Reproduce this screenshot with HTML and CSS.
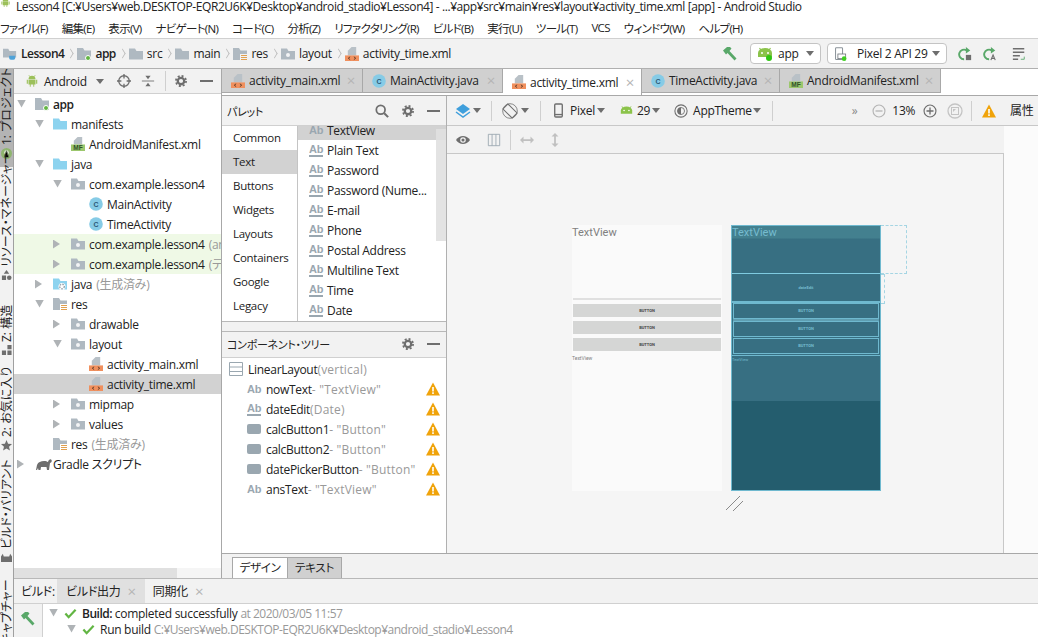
FILE: index.html
```html
<!DOCTYPE html>
<html lang="ja">
<head>
    <meta charset="UTF-8">
    <title>Lesson4 - Android Studio</title>
    <link rel="stylesheet" href="styles.css">
</head>
<body>
    <svg class="sprites" width="0" height="0">
        <symbol id="android" viewBox="0 0 16 16"><path fill="#9cc05a" d="M4 6a4 4 0 0 1 8 0zM4 6.700h8V12h-1.500v2.500h-1V12h-3v2.500h-1V12H4zM2 6.700h1.300V11H2zM12.700 6.700H14V11h-1.300z"/><path stroke="#9cc05a" d="M5.500 3 4.500 1.500M10.500 3l1-1.500"/></symbol>
        <symbol id="droid" viewBox="0 0 16 12"><path fill="#8bc34a" d="M1 10V6a7 5 0 0 1 14 0v4z"/><path stroke="#8bc34a" stroke-width="1.200" d="M4 3 2.500 1M12 3l1.500-2"/><circle cx="5" cy="6" r="1" fill="#fff"/><circle cx="11" cy="6" r="1" fill="#fff"/></symbol>
        <symbol id="droid-run" viewBox="0 0 16 14"><path fill="#8bc34a" d="M1 10V6a7 5 0 0 1 14 0v4z"/><path stroke="#8bc34a" stroke-width="1.200" d="M4 3 2.500 1M12 3l1.500-2"/><circle cx="5" cy="6" r="1" fill="#fff"/><circle cx="11" cy="6" r="1" fill="#fff"/><circle cx="12" cy="11" r="3" fill="#2fc612"/></symbol>
        <symbol id="folder" viewBox="0 0 14 14"><path fill="#afb9c1" d="M0 1.500h6L7.500 4H14v8.500H0z"/></symbol>
        <symbol id="folder-blue" viewBox="0 0 14 14"><path fill="#8dd3ef" d="M0 1.500h6L7.500 4H14v8.500H0z"/></symbol>
        <symbol id="package" viewBox="0 0 14 14"><path fill="#afb9c1" d="M0 1.500h6L7.500 4H14v8.500H0z"/><circle cx="7" cy="8" r="2" fill="#f2f4f5"/></symbol>
        <symbol id="module" viewBox="0 0 14 14"><path fill="#afb9c1" d="M0 1h6l1.500 2.500H14v9.500H0z"/><circle cx="11" cy="11" r="2.500" fill="#62b543" stroke="#fff"/></symbol>
        <symbol id="project" viewBox="0 0 16 14"><path fill="#afb9c1" d="M0 1h6l1.500 2.500H15V11H0z"/><path fill="#4fa3d9" d="M7 9h7v2.500a2 2 0 0 1-2 2H9a2 2 0 0 1-2-2z"/></symbol>
        <symbol id="res-folder" viewBox="0 0 14 14"><path fill="#afb9c1" d="M0 1h6l1.500 2.500H14V7H7v6H0z"/><path stroke="#e0a050" d="M8 8.500h6M8 10.500h6M8 12.500h6"/></symbol>
        <symbol id="gen-folder" viewBox="0 0 14 14"><path fill="#8dd3ef" d="M0 1.500h6L7.500 4H14v8.500H0z"/><circle cx="9" cy="9.500" r="3.500" fill="#fff"/><circle cx="9" cy="9.500" r="2.300" fill="none" stroke="#9aa7b0" stroke-width="1.500" stroke-dasharray="1.500 1"/></symbol>
        <symbol id="xml" viewBox="0 0 15 15"><path fill="#b9c1c7" d="M7 0h5v9H3V4z"/><path fill="#f0905e" d="M0 9h15v6H0z"/><path fill="none" stroke="#5a3a28" d="M5.500 10.500 3.500 12l2 1.500M9.500 10.500l2 1.500-2 1.500"/></symbol>
        <symbol id="manifest" viewBox="0 0 15 15"><path fill="#b9c1c7" d="M7 0h5v8H3V4z"/><path fill="#9cc76d" d="M0 8h15v7H0z"/><text x="7.500" y="14" text-anchor="middle" class="icon-text" fill="#30502a">MF</text></symbol>
        <symbol id="class" viewBox="0 0 14 14"><circle cx="7" cy="7" r="6.800" fill="#86cbe6"/><text x="7" y="10" text-anchor="middle" class="icon-text" fill="#2c5a78">C</text></symbol>
        <symbol id="gradle" viewBox="0 0 18 14"><path fill="#6e6e6e" d="M1 13l1-5c1-3 4-4 7-4 2 0 3 .500 4 1 .500-2 2-3 3-2.500s1 2 0 3l-1 .500-1 7h-2l-.500-3H6l-.500 3h-2l-.500-2-1 2z"/></symbol>
        <symbol id="gear" viewBox="0 0 16 16"><circle cx="8" cy="8" r="3.700" fill="none" stroke="#6e6e6e" stroke-width="2.600"/><circle cx="8" cy="8" r="5.800" fill="none" stroke="#6e6e6e" stroke-width="2" stroke-dasharray="2.300 2.250"/></symbol>
        <symbol id="hammer" viewBox="0 0 16 16"><path fill="#59a869" d="M1 4.500 5 1l3 0 1.500 1.500L7.500 5 14.500 12.500l-2 2L5.500 7 4 8.500z"/></symbol>
        <symbol id="warn" viewBox="0 0 14 14"><path fill="#f0a30a" d="M7 .500 14 13.500H0z"/><path fill="#fff" d="M6.200 5h1.600v4.500H6.200zM6.200 10.300h1.600v1.700H6.200z"/></symbol>
        <symbol id="search" viewBox="0 0 16 16"><circle cx="6.500" cy="6.500" r="5" fill="none" stroke="#6e6e6e" stroke-width="2"/><path stroke="#6e6e6e" stroke-width="2.400" d="m10.500 10.500 4.500 4.500"/></symbol>
        <symbol id="target" viewBox="0 0 16 16"><circle cx="8" cy="8" r="6" fill="none" stroke="#6e6e6e" stroke-width="1.500"/><path stroke="#6e6e6e" stroke-width="1.500" d="M8 0v5M8 11v5M0 8h5M11 8h5"/></symbol>
        <symbol id="collapse" viewBox="0 0 16 16"><path stroke="#6e6e6e" d="M1 8h14"/><path fill="#6e6e6e" d="M5 2h6L8 6zM5 14h6l-3-4z"/></symbol>
        <symbol id="layers" viewBox="0 0 16 16"><path fill="none" stroke="#3f9fdc" stroke-width="1.500" d="m1 9 7 5 7-5"/><path fill="#3f9fdc" d="m8 1 7 5-7 5-7-5z"/></symbol>
        <symbol id="rotate" viewBox="0 0 16 16"><circle cx="8" cy="8" r="7.300" fill="none" stroke="#6e6e6e" stroke-width=".800"/><rect x="4.500" y="1.500" width="7" height="13" fill="#f2f2f2" stroke="#6e6e6e" transform="rotate(-45 8 8)"/></symbol>
        <symbol id="phone" viewBox="0 0 10 16"><rect x=".800" y=".800" width="8.400" height="14.400" rx="1.200" fill="none" stroke="#6e6e6e" stroke-width="1.500"/><path stroke="#6e6e6e" stroke-width="1.500" d="M1 12.500h8"/></symbol>
        <symbol id="device" viewBox="0 0 16 18"><rect x="1" y="1" width="9" height="15" rx="1" fill="none" stroke="#8a9299" stroke-width="1.300"/><rect x="4" y="9" width="10" height="6" fill="#fff" stroke="#6a7076"/><circle cx="12" cy="15" r="3" fill="#3fcf20"/></symbol>
        <symbol id="theme" viewBox="0 0 16 16"><circle cx="8" cy="8" r="7" fill="none" stroke="#6e6e6e" stroke-width="1.200"/><circle cx="8" cy="8" r="4" fill="none" stroke="#6e6e6e"/><path fill="#6e6e6e" d="M8 4a4 4 0 0 0 0 8z"/></symbol>
        <symbol id="zoom-out" viewBox="0 0 16 16"><circle cx="8" cy="8" r="6.800" fill="none" stroke="#b5b5b5" stroke-width="1.300"/><path stroke="#b5b5b5" stroke-width="1.500" d="M4 8h8"/></symbol>
        <symbol id="zoom-in" viewBox="0 0 16 16"><circle cx="8" cy="8" r="6.800" fill="none" stroke="#6e6e6e" stroke-width="1.300"/><path stroke="#6e6e6e" stroke-width="1.500" d="M4 8h8M8 4v8"/></symbol>
        <symbol id="zoom-fit" viewBox="0 0 16 16"><circle cx="8" cy="8" r="7" fill="none" stroke="#c4c4c4" stroke-width="1.300"/><rect x="4.500" y="4.500" width="7" height="7" fill="none" stroke="#c4c4c4"/><path fill="#c4c4c4" d="M6 6h3l-3 3z"/></symbol>
        <symbol id="eye" viewBox="0 0 16 16"><path fill="#6e6e6e" d="M0 8c2-3 5-4.500 8-4.500S14 5 16 8c-2 3-5 4.500-8 4.500S2 11 0 8z"/><circle cx="8" cy="8" r="3.200" fill="#f2f2f2"/><circle cx="8" cy="8" r="1.800" fill="#6e6e6e"/></symbol>
        <symbol id="columns" viewBox="0 0 16 16"><path fill="none" stroke="#9aa7b0" d="M1.500 1.500h13v13h-13zM5.800 1.500v13M10.200 1.500v13"/></symbol>
        <symbol id="arrows-h" viewBox="0 0 16 16"><path fill="#c0c0c0" d="M0 8l4-4v3h8V4l4 4-4 4V9H4v3z"/></symbol>
        <symbol id="arrows-v" viewBox="0 0 16 16"><path fill="#c0c0c0" d="M8 0l4 4H9v8h3l-4 4-4-4h3V4H4z"/></symbol>
        <symbol id="linear" viewBox="0 0 14 14"><path fill="none" stroke="#9aa7b0" d="M.500.500h13v13H.500zM.500 5h13M.500 9.500h13"/></symbol>
        <symbol id="button" viewBox="0 0 14 14"><rect y="2" width="14" height="10" rx="2" fill="#9aa7b0"/></symbol>
        <symbol id="rerun" viewBox="0 0 16 16"><path fill="none" stroke="#59a869" stroke-width="2.200" d="M7 14a5.500 5.500 0 1 1 3-10"/><path fill="#59a869" d="M9 0l5 4-5 3.500z"/><rect x="9" y="9" width="6" height="6" fill="#6e6e6e"/></symbol>
        <symbol id="apply" viewBox="0 0 16 16"><path fill="none" stroke="#59a869" stroke-width="2.200" d="M7 14a5.500 5.500 0 1 1 3-10"/><path fill="#59a869" d="M9 0l5 4-5 3.500z"/><path fill="none" stroke="#6e6e6e" stroke-width="1.300" d="m9 15 2.500-6 2.500 6M10 13h3"/></symbol>
        <symbol id="lines" viewBox="0 0 16 16"><path stroke="#6e6e6e" stroke-width="1.500" d="M1 2h13M1 6h13M1 10h8M1 14h6"/><path fill="none" stroke="#59a869" d="M10 14h4v-3"/></symbol>
        <symbol id="check" viewBox="0 0 14 14"><path fill="none" stroke="#62b543" stroke-width="2.400" d="m1.500 7 3.500 4 7.500-8"/></symbol>
        <symbol id="studio" viewBox="0 0 12 12"><circle cx="6" cy="6" r="6" fill="#8fb56f"/><circle cx="6" cy="5" r="2.500" fill="#e8efe0"/><path stroke="#5b6b50" d="M3.500 10 6 3l2.500 7"/></symbol>
        <symbol id="grid-icon" viewBox="0 0 12 12"><path fill="#6e6e6e" d="M1 6h4.500v5H1zM7 6h4.500v5H7zM7 0h4.500v4.500H7z"/></symbol>
        <symbol id="struct-icon" viewBox="0 0 12 12"><path fill="#6e6e6e" d="M6 0l3 4H3zM1 6h4.500v5H1z"/><circle cx="9" cy="8.500" r="2.500" fill="#6e6e6e"/></symbol>
        <symbol id="star" viewBox="0 0 14 14"><path fill="#6e6e6e" d="m7 0 2 4.800 5 .4-3.800 3.300 1.200 5L7 10.800 2.600 13.500l1.200-5L0 5.200l5-.4z"/></symbol>
        <symbol id="variant" viewBox="0 0 12 12"><path fill="#6e6e6e" d="M0 11V5l2-3 1 3h6l1-3 2 3v6z"/></symbol>
    </svg>

    <div class="titlebar">
        <svg class="title-icon"><use href="#android"/></svg>
        <span>Lesson4 [C:¥Users¥web.DESKTOP-EQR2U6K¥Desktop¥android_stadio¥Lesson4] - ...¥app¥src¥main¥res¥layout¥activity_time.xml [app] - Android Studio</span>
    </div>

    <div class="menubar">
        <span>ファイル(F)</span><span>編集(E)</span><span>表示(V)</span><span>ナビゲート(N)</span><span>コード(C)</span><span>分析(Z)</span><span>リファクタリング(R)</span><span>ビルド(B)</span><span>実行(U)</span><span>ツール(T)</span><span>VCS</span><span>ウィンドウ(W)</span><span>ヘルプ(H)</span>
    </div>

    <div class="navbar">
        <svg class="ico nav-first"><use href="#project"/></svg><b>Lesson4</b><i class="chev"></i>
        <svg class="ico"><use href="#module"/></svg><b>app</b><i class="chev"></i>
        <svg class="ico"><use href="#folder"/></svg><span>src</span><i class="chev"></i>
        <svg class="ico"><use href="#folder"/></svg><span>main</span><i class="chev"></i>
        <svg class="ico"><use href="#res-folder"/></svg><span>res</span><i class="chev"></i>
        <svg class="ico"><use href="#package"/></svg><span>layout</span><i class="chev"></i>
        <svg class="ico"><use href="#xml"/></svg><span>activity_time.xml</span>
        <div class="nav-right">
            <svg class="ico hammer-top"><use href="#hammer"/></svg>
            <div class="combo combo-app"><svg class="ico-droid"><use href="#droid-run"/></svg><span>app</span><i class="caret"></i></div>
            <div class="combo combo-device"><svg class="ico"><use href="#device"/></svg><span>Pixel 2 API 29</span><i class="caret"></i></div>
            <svg class="ico run-first"><use href="#rerun"/></svg>
            <svg class="ico"><use href="#apply"/></svg>
            <svg class="ico"><use href="#lines"/></svg>
        </div>
    </div>

    <div class="workspace">
        <div class="stripe">
            <div class="stripe-item active"><svg class="stripe-icon"><use href="#studio"/></svg><span>1: プロジェクト</span></div>
            <div class="stripe-item res"><svg class="stripe-icon"><use href="#struct-icon"/></svg><span>リソース・マネージャー</span></div>
            <div class="stripe-item struct"><svg class="stripe-icon"><use href="#grid-icon"/></svg><span>Z: 構造</span></div>
            <div class="stripe-item fav"><svg class="stripe-icon"><use href="#star"/></svg><span>2: お気に入り</span></div>
            <div class="stripe-item variants"><svg class="stripe-icon"><use href="#variant"/></svg><span>ビルド・バリアント</span></div>
            <div class="stripe-item capture"><span>キャプチャー</span></div>
        </div>

        <div class="center">
            <div class="upper">
                <div class="project">
                    <div class="panel-head project-head">
                        <svg class="ico"><use href="#android"/></svg>
                        <span>Android</span><i class="caret"></i>
                        <svg class="ico head-tool"><use href="#target"/></svg>
                        <svg class="ico head-tool"><use href="#collapse"/></svg>
                        <i class="sep"></i>
                        <svg class="ico"><use href="#gear"/></svg>
                        <i class="minus"></i>
                    </div>
                    <div class="tree">
                        <div class="row d0"><i class="arrow open"></i><svg class="ico"><use href="#module"/></svg><b>app</b></div>
                        <div class="row d1"><i class="arrow open"></i><svg class="ico"><use href="#folder-blue"/></svg><span>manifests</span></div>
                        <div class="row d2"><i class="arrow none"></i><svg class="ico"><use href="#manifest"/></svg><span>AndroidManifest.xml</span></div>
                        <div class="row d1"><i class="arrow open"></i><svg class="ico"><use href="#folder-blue"/></svg><span>java</span></div>
                        <div class="row d2"><i class="arrow open"></i><svg class="ico"><use href="#package"/></svg><span>com.example.lesson4</span></div>
                        <div class="row d3"><i class="arrow none"></i><svg class="ico"><use href="#class"/></svg><span>MainActivity</span></div>
                        <div class="row d3"><i class="arrow none"></i><svg class="ico"><use href="#class"/></svg><span>TimeActivity</span></div>
                        <div class="row d2 test"><i class="arrow"></i><svg class="ico"><use href="#package"/></svg><span>com.example.lesson4</span><em>(androidTest)</em></div>
                        <div class="row d2 test"><i class="arrow"></i><svg class="ico"><use href="#package"/></svg><span>com.example.lesson4</span><em>(テスト)</em></div>
                        <div class="row d1"><i class="arrow"></i><svg class="ico"><use href="#gen-folder"/></svg><span>java</span><em>(生成済み)</em></div>
                        <div class="row d1"><i class="arrow open"></i><svg class="ico"><use href="#res-folder"/></svg><span>res</span></div>
                        <div class="row d2"><i class="arrow"></i><svg class="ico"><use href="#package"/></svg><span>drawable</span></div>
                        <div class="row d2"><i class="arrow open"></i><svg class="ico"><use href="#package"/></svg><span>layout</span></div>
                        <div class="row d3"><i class="arrow none"></i><svg class="ico"><use href="#xml"/></svg><span>activity_main.xml</span></div>
                        <div class="row d3 selected"><i class="arrow none"></i><svg class="ico"><use href="#xml"/></svg><span>activity_time.xml</span></div>
                        <div class="row d2"><i class="arrow"></i><svg class="ico"><use href="#package"/></svg><span>mipmap</span></div>
                        <div class="row d2"><i class="arrow"></i><svg class="ico"><use href="#package"/></svg><span>values</span></div>
                        <div class="row d1"><i class="arrow none"></i><svg class="ico"><use href="#res-folder"/></svg><span>res</span><em>(生成済み)</em></div>
                        <div class="row d0"><i class="arrow"></i><svg class="ico gradle"><use href="#gradle"/></svg><span>Gradle スクリプト</span></div>
                    </div>
                    <div class="hscroll"><div class="hthumb"></div></div>
                </div>

                <div class="editor">
                    <div class="tabbar">
                        <div class="tab t-main"><svg class="ico"><use href="#xml"/></svg><span>activity_main.xml</span><i class="close">×</i></div>
                        <div class="tab t-mainact"><svg class="ico"><use href="#class"/></svg><span>MainActivity.java</span><i class="close">×</i></div>
                        <div class="tab t-time on"><svg class="ico"><use href="#xml"/></svg><span>activity_time.xml</span><i class="close">×</i></div>
                        <div class="tab t-timeact"><svg class="ico"><use href="#class"/></svg><span>TimeActivity.java</span><i class="close">×</i></div>
                        <div class="tab t-manifest"><svg class="ico"><use href="#manifest"/></svg><span>AndroidManifest.xml</span><i class="close">×</i></div>
                    </div>
                    <div class="editor-body">
                        <div class="editor-main">
                            <div class="left-col">
                                <div class="panel-head palette-head">
                                    <span class="panel-title">パレット</span>
                                    <svg class="ico"><use href="#search"/></svg>
                                    <svg class="ico"><use href="#gear"/></svg>
                                    <i class="minus"></i>
                                </div>
                                <div class="palette">
                                    <div class="cats">
                                        <div class="cat">Common</div>
                                        <div class="cat on">Text</div>
                                        <div class="cat">Buttons</div>
                                        <div class="cat">Widgets</div>
                                        <div class="cat">Layouts</div>
                                        <div class="cat">Containers</div>
                                        <div class="cat">Google</div>
                                        <div class="cat">Legacy</div>
                                    </div>
                                    <div class="widgets">
                                        <div class="widget on"><span class="ab">Ab</span>TextView</div>
                                        <div class="widget"><span class="ab line">Ab</span>Plain Text</div>
                                        <div class="widget"><span class="ab line">Ab</span>Password</div>
                                        <div class="widget"><span class="ab line">Ab</span>Password (Nume...</div>
                                        <div class="widget"><span class="ab line">Ab</span>E-mail</div>
                                        <div class="widget"><span class="ab line">Ab</span>Phone</div>
                                        <div class="widget"><span class="ab line">Ab</span>Postal Address</div>
                                        <div class="widget"><span class="ab line">Ab</span>Multiline Text</div>
                                        <div class="widget"><span class="ab line">Ab</span>Time</div>
                                        <div class="widget"><span class="ab line">Ab</span>Date</div>
                                        <div class="vscroll"></div>
                                    </div>
                                </div>
                                <div class="panel-head comp-head">
                                    <span class="panel-title">コンポーネント・ツリー</span>
                                    <svg class="ico"><use href="#gear"/></svg>
                                    <i class="minus"></i>
                                </div>
                                <div class="comp-tree">
                                    <div class="comp root"><svg class="ico"><use href="#linear"/></svg><span>LinearLayout<em>(vertical)</em></span></div>
                                    <div class="comp"><span class="ab">Ab</span><span>nowText<em>- "TextView"</em></span><svg class="ico warn"><use href="#warn"/></svg></div>
                                    <div class="comp"><span class="ab line">Ab</span><span>dateEdit<em>(Date)</em></span><svg class="ico warn"><use href="#warn"/></svg></div>
                                    <div class="comp"><svg class="ico btn-ico"><use href="#button"/></svg><span>calcButton1<em>- "Button"</em></span><svg class="ico warn"><use href="#warn"/></svg></div>
                                    <div class="comp"><svg class="ico btn-ico"><use href="#button"/></svg><span>calcButton2<em>- "Button"</em></span><svg class="ico warn"><use href="#warn"/></svg></div>
                                    <div class="comp"><svg class="ico btn-ico"><use href="#button"/></svg><span>datePickerButton<em>- "Button"</em></span><svg class="ico warn"><use href="#warn"/></svg></div>
                                    <div class="comp"><span class="ab">Ab</span><span>ansText<em>- "TextView"</em></span><svg class="ico warn"><use href="#warn"/></svg></div>
                                </div>
                            </div>

                            <div class="design">
                                <div class="toolbar tb-one">
                                    <svg class="ico tb-layers"><use href="#layers"/></svg><i class="caret"></i>
                                    <i class="sep tb-sep1"></i>
                                    <svg class="ico tb-rotate"><use href="#rotate"/></svg><i class="caret"></i>
                                    <i class="sep tb-sep2"></i>
                                    <svg class="ico-phone"><use href="#phone"/></svg>
                                    <span class="tb-pixel">Pixel</span><i class="caret"></i>
                                    <svg class="ico-droid tb-droid"><use href="#droid"/></svg>
                                    <span class="tb-api">29</span><i class="caret"></i>
                                    <svg class="ico tb-theme"><use href="#theme"/></svg>
                                    <span class="tb-app">AppTheme</span><i class="caret"></i>
                                    <i class="sep tb-sep3"></i>
                                    <span class="tb-more">»</span>
                                    <svg class="ico"><use href="#zoom-out"/></svg>
                                    <span class="tb-zoom">13%</span>
                                    <svg class="ico"><use href="#zoom-in"/></svg>
                                    <svg class="ico tb-fit"><use href="#zoom-fit"/></svg>
                                    <i class="sep tb-sep4"></i>
                                    <svg class="ico tb-warn"><use href="#warn"/></svg>
                                </div>
                                <div class="toolbar tb-two">
                                    <svg class="ico"><use href="#eye"/></svg>
                                    <svg class="ico tb-cols"><use href="#columns"/></svg>
                                    <i class="sep"></i>
                                    <svg class="ico"><use href="#arrows-h"/></svg>
                                    <svg class="ico tb-vert"><use href="#arrows-v"/></svg>
                                </div>
                                <div class="surface">
                                    <div class="screens">
                                        <div class="screen light">
                                            <div class="s-title">TextView</div>
                                            <div class="s-edit"></div>
                                            <div class="s-btn">BUTTON</div>
                                            <div class="s-btn">BUTTON</div>
                                            <div class="s-btn">BUTTON</div>
                                            <div class="s-small">TextView</div>
                                        </div>
                                        <div class="screen blue">
                                            <div class="b-title">TextView</div>
                                            <div class="b-edit">dateEdit</div>
                                            <div class="b-btn">BUTTON</div>
                                            <div class="b-btn hatch">BUTTON</div>
                                            <div class="b-btn">BUTTON</div>
                                            <div class="b-small">TextView</div>
                                            <div class="b-empty"></div>
                                            <div class="dash dash-one"></div>
                                            <div class="dash dash-two"></div>
                                        </div>
                                    </div>
                                    <svg class="resize" width="20" height="18"><path stroke="#8a8a8a" d="M1 15 15 1M8 16 18 6"/></svg>
                                </div>
                            </div>

                            <div class="attrs">
                                <div class="attrs-head">属性</div>
                            </div>
                        </div>
                        <div class="mode-tabs">
                            <div class="mode on">デザイン</div>
                            <div class="mode">テキスト</div>
                        </div>
                    </div>
                </div>
            </div>

            <div class="build">
                <div class="build-tabs">
                    <span class="build-label">ビルド:</span>
                    <div class="build-tab on">ビルド出力<i class="close">×</i></div>
                    <div class="build-tab">同期化<i class="close">×</i></div>
                </div>
                <div class="build-body">
                    <div class="build-tools"><svg class="ico"><use href="#hammer"/></svg></div>
                    <div class="build-log">
                        <div class="log l0"><i class="arrow open"></i><svg class="ico-check"><use href="#check"/></svg><span><b>Build:</b> completed successfully <em>at 2020/03/05 11:57</em></span></div>
                        <div class="log l1"><i class="arrow open"></i><svg class="ico-check"><use href="#check"/></svg><span>Run build <em>C:¥Users¥web.DESKTOP-EQR2U6K¥Desktop¥android_stadio¥Lesson4</em></span></div>
                    </div>
                </div>
            </div>
        </div>
    </div>
</body>
</html>
```

FILE: styles.css
```css
* {
    box-sizing: border-box;
}
html, body {
    margin: 0;
    height: 100%;
}
body {
    width: 1038px;
    height: 637px;
    overflow: hidden;
    display: flex;
    flex-direction: column;
    background: #f2f2f2;
    color: #222;
    font-family: "Open Sans", "Noto Sans CJK JP", sans-serif;
    font-size: 12px;
    letter-spacing: -.28px;
    font-feature-settings: "palt";
}
i, em {
    font-style: normal;
}
em {
    color: #999;
}
b {
    font-weight: 600;
    letter-spacing: -.5px;
}
.sprites {
    position: absolute;
}
.icon-text {
    font-family: "Liberation Sans", sans-serif;
    font-size: 7px;
    font-weight: bold;
    letter-spacing: 0;
}
.ico {
    width: 14px;
    height: 14px;
    flex: none;
}
.ico-droid {
    width: 16px;
    height: 14px;
    flex: none;
}
.ico-phone {
    width: 9px;
    height: 15px;
    flex: none;
}
.ico-check {
    width: 13px;
    height: 13px;
    flex: none;
}
.caret {
    flex: none;
    width: 0;
    height: 0;
    border-left: 4px solid transparent;
    border-right: 4px solid transparent;
    border-top: 5px solid #6e6e6e;
}
.sep {
    flex: none;
    width: 1px;
    height: 20px;
    background: #cfcfcf;
}
.minus {
    flex: none;
    width: 13px;
    height: 2px;
    background: #6e6e6e;
}
.close {
    color: #b5b5b5;
    font-size: 15px;
    line-height: 1;
}

/* top bars */
.titlebar {
    height: 17px;
    background: #fff;
    display: flex;
    align-items: center;
    padding-bottom: 4px;
    white-space: nowrap;
    letter-spacing: -.41px;
}
.title-icon {
    width: 11px;
    height: 11px;
    margin: -9px 5px 0 0;
}
.menubar {
    height: 22px;
    background: #fff;
    display: flex;
    align-items: center;
    gap: 14px;
    white-space: nowrap;
    border-bottom: 1px solid #d0d0d0;
    font-size: 11.500px;
    letter-spacing: -.7px;
}
.navbar {
    height: 30px;
    display: flex;
    align-items: center;
    border-bottom: 1px solid #b0b0b0;
    white-space: nowrap;
}
.navbar .ico {
    margin-right: 4px;
}
.nav-first {
    margin-left: 3px;
}
.chev {
    flex: none;
    width: 7px;
    height: 7px;
    margin: 0 3px;
    border-top: 1px solid #b8b8b8;
    border-right: 1px solid #b8b8b8;
    transform: scaleX(.6) rotate(45deg);
}
.nav-right {
    margin-left: auto;
    display: flex;
    align-items: center;
}
.hammer-top {
    width: 16px;
    height: 16px;
}
.combo {
    height: 21px;
    display: flex;
    align-items: center;
    gap: 5px;
    background: #fff;
    border: 1px solid #c4c4c4;
    border-radius: 4px;
    padding: 0 6px;
}
.combo-app {
    width: 71px;
    margin-left: 8px;
}
.combo-app .caret, .combo-device .caret {
    margin-left: auto;
}
.combo-device {
    width: 120px;
    margin-left: 6px;
}
.navbar .run-first {
    margin-left: 11px;
    margin-right: 11px;
}
.nav-right .ico:nth-last-child(2) {
    margin-right: 15px;
}
.nav-right .ico:last-child {
    margin-right: 12px;
}

.workspace {
    flex: 1;
    display: flex;
    min-height: 0;
}

/* side stripe */
.stripe {
    width: 14px;
    flex: none;
    border-right: 1px solid #a0a0a0;
    overflow: hidden;
    font-size: 12px;
    line-height: 13px;
    letter-spacing: 0;
    display: flex;
    flex-direction: column;
}
.stripe-item {
    flex: none;
    display: flex;
    align-items: center;
    gap: 3px;
    writing-mode: vertical-rl;
    text-orientation: sideways;
    transform: rotate(180deg);
    white-space: nowrap;
}
.stripe-icon {
    width: 11px;
    height: 11px;
    flex: none;
    transform: rotate(180deg);
}
.stripe-item.active {
    height: 98px;
    background: #b4b4b4;
    padding-top: 8px;
}
.stripe-item.res {
    margin-top: 4px;
    height: 110px;
}
.stripe-item.struct {
    margin-top: 25px;
    height: 50px;
}
.stripe-item.fav {
    margin-top: 20px;
    height: 75px;
}
.stripe-item.variants {
    margin-top: 22px;
    height: 90px;
}
.stripe-item.capture {
    margin-top: 23px;
    height: 58px;
}

.center {
    flex: 1;
    min-width: 0;
    display: flex;
    flex-direction: column;
}
.upper {
    height: 509px;
    display: flex;
}

/* project panel */
.project {
    width: 208px;
    flex: none;
    display: flex;
    flex-direction: column;
    background: #fff;
    border-right: 1px solid #a8a8a8;
    overflow: hidden;
}
.panel-head {
    flex: none;
    display: flex;
    align-items: center;
    background: #f2f2f2;
    white-space: nowrap;
}
.project-head {
    height: 25px;
    padding-left: 11px;
    gap: 5px;
    border-bottom: 1px solid #d0d0d0;
}
.project-head .caret {
    margin: 0 8px 0 4px;
}
.project-head .head-tool {
    margin-right: 5px;
}
.project-head .sep {
    margin-right: 3px;
}
.project-head .minus {
    margin-left: 7px;
}
.tree {
    flex: 1;
}
.row {
    height: 20px;
    display: flex;
    align-items: center;
    white-space: nowrap;
    overflow: hidden;
}
.row .ico {
    margin-right: 4px;
}
.row em {
    margin-left: 4px;
}
.d0 {
    padding-left: 3px;
}
.d1 {
    padding-left: 21px;
}
.d2 {
    padding-left: 39px;
}
.d3 {
    padding-left: 57px;
}
.arrow {
    flex: none;
    width: 18px;
    height: 9px;
    background: #afb3b6;
    clip-path: polygon(0 0, 7px 4.5px, 0 9px);
}
.arrow.open {
    clip-path: polygon(0 0, 9px 0, 4.5px 8px);
}
.arrow.none {
    background: none;
}
.row.test {
    background: #eff9e6;
}
.row.selected {
    background: #d2d2d2;
}
.row .gradle {
    width: 18px;
    margin-right: 0;
}
.hscroll {
    height: 10px;
    flex: none;
    background: #f5f5f5;
}
.hthumb {
    width: 163px;
    height: 10px;
    background: #e0e0e0;
}

/* editor */
.editor {
    flex: 1;
    min-width: 0;
    display: flex;
    flex-direction: column;
}
.tabbar {
    height: 27px;
    flex: none;
    display: flex;
    background: #fff;
    border-bottom: 1px solid #a8a8a8;
}
.tab {
    height: 24px;
    display: flex;
    align-items: center;
    padding-left: 9px;
    gap: 4px;
    background: #d0d0d0;
    border-right: 1px solid #a8a8a8;
    border-bottom: 1px solid #a8a8a8;
    white-space: nowrap;
}
.tab .close {
    margin-left: auto;
    margin-right: 7px;
}
.tab.on {
    background: #fff;
    height: 26px;
    border-bottom: 0;
    padding-left: 9px;
}
.t-main { width: 141px; }
.t-mainact { width: 140px; }
.t-time { width: 139px; }
.t-timeact { width: 138px; }
.t-manifest { width: 161px; }

.editor-body {
    flex: 1;
    min-height: 0;
    display: flex;
    flex-direction: column;
}
.editor-main {
    flex: 1;
    min-height: 0;
    display: flex;
}
.left-col {
    width: 225px;
    flex: none;
    display: flex;
    flex-direction: column;
    border-right: 1px solid #b0b0b0;
}
.panel-title {
    margin-right: auto;
    font-size: 11px;
}
.palette-head {
    height: 29px;
    padding: 0 6px 0 5px;
    gap: 12px;
}
.palette {
    height: 197px;
    flex: none;
    display: flex;
    background: #fff;
    border-top: 1px solid #d0d0d0;
    border-bottom: 1px solid #b8b8b8;
    overflow: hidden;
}
.cats {
    width: 76px;
    flex: none;
    border-right: 1px solid #c4c4c4;
}
.cat {
    height: 24px;
    line-height: 24px;
    padding-left: 11px;
    font-size: 11.500px;
}
.cat.on {
    background: #d2d2d2;
}
.widgets {
    flex: 1;
    position: relative;
    margin-top: -6px;
}
.widget {
    height: 20px;
    display: flex;
    align-items: center;
    white-space: nowrap;
    padding-left: 11px;
}
.widget.on {
    background: #d2d2d2;
}
.ab {
    flex: none;
    width: 14px;
    margin-right: 4px;
    color: #9aa7b0;
    font-family: "Liberation Sans", sans-serif;
    font-size: 11px;
    font-weight: bold;
    line-height: 12px;
    text-align: center;
}
.ab.line {
    border-bottom: 2px solid #9aa7b0;
}
.vscroll {
    position: absolute;
    top: 9px;
    right: 0;
    width: 10px;
    height: 112px;
    background: #e0e0e0;
    opacity: .9;
}
.comp-head {
    height: 36px;
    padding: 9px 6px 0 5px;
    gap: 12px;
    border-bottom: 1px solid #d0d0d0;
    box-shadow: inset 0 9px #f2f2f2, inset 0 10px #b8b8b8;
}
.comp-tree {
    flex: 1;
    background: #fff;
    padding: 1px 6px 0 7px;
}
.comp {
    height: 20px;
    display: flex;
    align-items: center;
    padding-left: 18px;
    white-space: nowrap;
}
.comp.root {
    padding-left: 0;
}
.comp.root .ico {
    margin-right: 5px;
}
.comp .ab, .btn-ico {
    margin-right: 5px;
}
.comp em {
    letter-spacing: .2px;
}
.warn {
    margin-left: auto;
}

/* design surface */
.design {
    flex: 1;
    min-width: 0;
    display: flex;
    flex-direction: column;
}
.toolbar {
    flex: none;
    display: flex;
    align-items: center;
    white-space: nowrap;
    border-bottom: 1px solid #c8c8c8;
}
.tb-one {
    height: 30px;
    padding-left: 8px;
}
.tb-layers {
    width: 16px;
    height: 16px;
    margin-right: 2px;
}
.tb-sep1 {
    margin: 0 10px;
}
.tb-rotate {
    width: 16px;
    height: 16px;
    margin-right: 3px;
}
.tb-sep2 {
    margin: 0 13px 0 11px;
}
.tb-pixel {
    margin: 0 2px 0 7px;
}
.tb-droid {
    width: 13px;
    height: 11px;
    margin-left: 15px;
    margin-right: 2px;
}
.tb-api {
    margin: 0 2px;
}
.tb-theme {
    margin: 0 5px 0 14px;
}
.tb-app {
    margin-right: 1px;
}
.tb-sep3 {
    margin-left: 11px;
}
.tb-more {
    margin-left: 79px;
    margin-right: 15px;
    color: #888;
}
.tb-zoom {
    margin: 0 8px 0 6px;
}
.tb-fit {
    width: 16px;
    height: 16px;
    margin-left: 10px;
}
.tb-sep4 {
    margin: 0 10px 0 8px;
}
.tb-two {
    height: 28px;
    padding-left: 9px;
}
.tb-cols {
    margin: 0 9px 0 17px;
}
.tb-two .sep {
    margin-right: 9px;
}
.tb-vert {
    margin-left: 14px;
}
.surface {
    flex: 1;
    min-height: 0;
    background: #f5f5f5;
    padding: 71px 0 0 125px;
    border-right: 1px solid #c8c8c8;
}
.screens {
    display: flex;
    gap: 9px;
}
.screen {
    width: 150px;
    height: 266px;
    position: relative;
    font-family: "Roboto", sans-serif;
    letter-spacing: 0;
}
.screen.light {
    background: #fafafa;
    color: #808080;
    display: flex;
    flex-direction: column;
}
.s-title {
    height: 73px;
    font-size: 11px;
    line-height: 16px;
}
.s-edit {
    height: 2px;
    margin: 0 1px 4px;
    background: #e0e0e0;
}
.s-btn {
    height: 13px;
    margin: 0 1px 4px;
    background: #d5d6d5;
    color: #444;
    font-size: 4px;
    font-weight: bold;
    line-height: 13px;
    text-align: center;
}
.s-small {
    font-size: 5px;
    line-height: 7px;
}
.screen.blue {
    background: #376f82;
    border: 1px solid #6fb9cf;
    color: #76bccf;
    display: flex;
    flex-direction: column;
}
.b-title {
    height: 48px;
    font-size: 11px;
    line-height: 14px;
    border-bottom: 1px solid #7fcbe0;
    background: linear-gradient(#43808f 0, #43808f 12px, #376f82 13px);
}
.b-edit {
    height: 29px;
    font-size: 4px;
    font-weight: bold;
    line-height: 28px;
    text-align: center;
    border-bottom: 2px solid #6fb9cf;
}
.b-btn {
    height: 16px;
    margin: 0 1px;
    border: 1px solid #6fb9cf;
    font-size: 4px;
    font-weight: bold;
    line-height: 14px;
    text-align: center;
}
.b-btn.hatch {
    margin-top: 2px;
    margin-bottom: 1px;
    box-shadow: 0 -2px #5f9fb2;
}
.b-small {
    font-size: 4px;
    line-height: 6px;
    margin-top: 1px;
    height: 46px;
    border-top: 1px solid #6fb9cf;
    padding-top: 1px;
}
.b-empty {
    flex: 1;
    background: #245d6e;
}
.dash {
    position: absolute;
    border: 1px dashed #a5d5e3;
    border-left: 0;
}
.dash-one {
    left: 149px;
    top: -1px;
    width: 26px;
    height: 49px;
}
.dash-two {
    left: 149px;
    top: 48px;
    width: 4px;
    height: 30px;
}
.resize {
    display: block;
    margin: 4px 0 0 153px;
}
.attrs {
    width: 34px;
    flex: none;
    background: #fbfbfb;
}
.attrs-head {
    height: 30px;
    line-height: 29px;
    padding-left: 6px;
    background: #f2f2f2;
    border-bottom: 1px solid #c8c8c8;
}
.mode-tabs {
    height: 25px;
    flex: none;
    display: flex;
    padding-left: 10px;
    border-top: 1px solid #a8a8a8;
    font-size: 11.500px;
}
.mode {
    width: 55px;
    margin-top: 3px;
    background: #d0d0d0;
    border: 1px solid #a8a8a8;
    border-bottom: 0;
    text-align: center;
    line-height: 19px;
}
.mode.on {
    background: #fff;
    border-right: 0;
}

/* build window */
.build {
    flex: 1;
    min-height: 0;
    border-top: 1px solid #b8b8b8;
    display: flex;
    flex-direction: column;
}
.build-tabs {
    height: 25px;
    flex: none;
    display: flex;
    align-items: center;
    border-bottom: 1px solid #d0d0d0;
    white-space: nowrap;
}
.build-label {
    width: 43px;
    padding-left: 7px;
}
.build-tab {
    width: 88px;
    height: 100%;
    display: flex;
    align-items: center;
    justify-content: center;
    gap: 7px;
}
.build-tab.on {
    background: #e0e0e0;
}
.build-tab + .build-tab {
    width: 66px;
}
.build-body {
    flex: 1;
    min-height: 0;
    display: flex;
    background: #fff;
}
.build-tools {
    width: 29px;
    flex: none;
    background: #f2f2f2;
    border-right: 1px solid #d0d0d0;
    padding: 7px 0 0 6px;
}
.build-tools .ico {
    width: 16px;
    height: 16px;
}
.build-log {
    flex: 1;
    min-width: 0;
    padding-top: 1px;
}
.log {
    height: 16px;
    display: flex;
    align-items: center;
    white-space: nowrap;
}
.log .arrow {
    width: 15px;
}
.log .ico-check {
    margin-right: 5px;
}
.log em {
    letter-spacing: -.5px;
}
.l0 {
    padding-left: 6px;
}
.l1 {
    padding-left: 24px;
}
```
